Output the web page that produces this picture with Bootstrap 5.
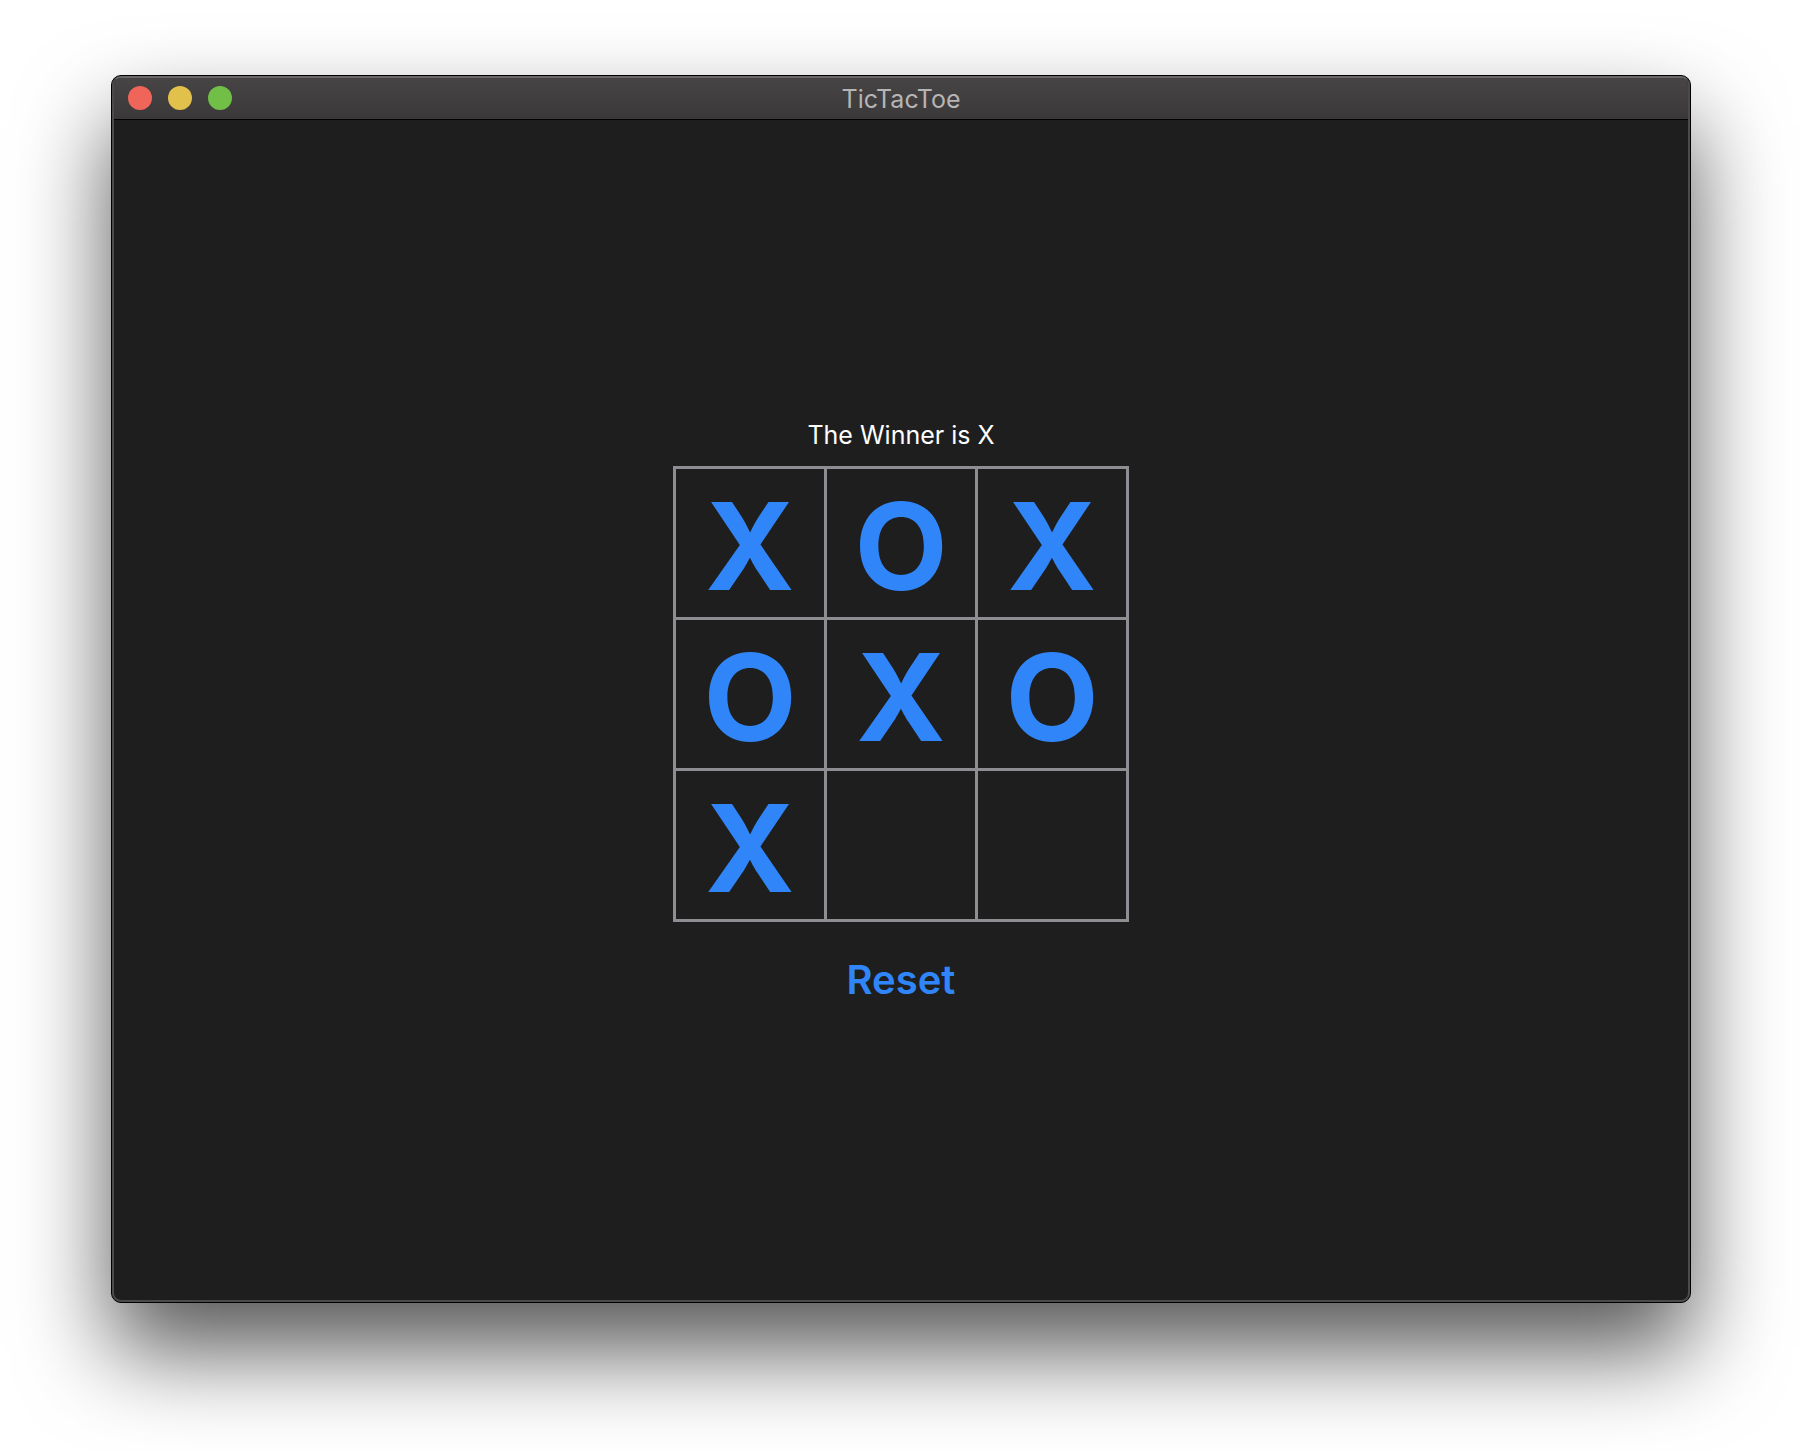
<!DOCTYPE html>
<html lang="en">
<head>
<meta charset="utf-8">
<meta name="viewport" content="width=device-width, initial-scale=1">
<title>TicTacToe</title>
<link href="https://cdn.jsdelivr.net/npm/bootstrap@5.3.0/dist/css/bootstrap.min.css" rel="stylesheet">
<style>
  body {
    padding: 75px 111px 147px;
    background: #fff;
    font-family: Inter, "Liberation Sans", sans-serif;
  }
  .app-window {
    background: #1e1e1e;
    border: 1px solid #000;
    border-radius: 10px;
    box-shadow: 0 48px 92px rgba(0, 0, 0, .66);
  }
  .app-frame {
    border: 2px solid #4b4b4b;
    border-top-color: #696768;
    border-radius: 9px;
  }
  .title-bar {
    height: 42px;
    padding: 0 14px;
    background: linear-gradient(#464445, #3a3838);
    border-bottom: 1px solid #000;
  }
  .title-text {
    color: #b6b4b5;
    font-size: 25px;
    line-height: 32px;
    font-weight: 400;
  }
  .light {
    width: 24px;
    height: 24px;
    border-radius: 50%;
  }
  .light-close { background: #f0655a; }
  .light-min { background: #e1c04c; }
  .light-zoom { background: #71bf47; }
  .game {
    padding-top: 2px;
  }
  .status-text {
    margin-bottom: 15px;
    color: #fff;
    font-size: 25px;
    line-height: 32px;
  }
  .board {
    display: grid;
    grid-template-columns: repeat(3, 148px);
    grid-auto-rows: 148px;
    gap: 3px;
    padding: 3px;
    margin-bottom: 35px;
    background: #8e8d92;
  }
  .board-cell {
    padding: 6px 0 0;
    border: 0;
    background: #1e1e1e;
    color: #3086f8;
    font-size: 121px;
    line-height: 142px;
    font-weight: 700;
  }
  .reset-btn, .reset-btn:hover {
    color: #3086f8;
    font-size: 40px;
    line-height: 46px;
    font-weight: 600;
  }
</style>
</head>
<body class="min-vh-100 d-flex flex-column">
<main class="app-window flex-grow-1 d-flex flex-column">
  <div class="app-frame flex-grow-1 d-flex flex-column overflow-hidden">
    <header class="title-bar d-flex align-items-center">
      <div class="d-flex gap-3 flex-fill w-100 align-self-start pt-2">
        <button type="button" class="light light-close border-0 p-0" aria-label="Close"></button>
        <button type="button" class="light light-min border-0 p-0" aria-label="Minimize"></button>
        <button type="button" class="light light-zoom border-0 p-0" aria-label="Zoom"></button>
      </div>
      <h1 class="title-text m-0">TicTacToe</h1>
      <div class="flex-fill w-100"></div>
    </header>
    <section class="game flex-grow-1 d-flex flex-column align-items-center justify-content-center">
      <p class="status-text" role="status">The Winner is X</p>
      <div class="board">
        <button type="button" class="board-cell">X</button>
        <button type="button" class="board-cell">O</button>
        <button type="button" class="board-cell">X</button>
        <button type="button" class="board-cell">O</button>
        <button type="button" class="board-cell">X</button>
        <button type="button" class="board-cell">O</button>
        <button type="button" class="board-cell">X</button>
        <button type="button" class="board-cell" aria-label="Empty, row 3 column 2"></button>
        <button type="button" class="board-cell" aria-label="Empty, row 3 column 3"></button>
      </div>
      <button type="button" class="reset-btn btn border-0 p-0">Reset</button>
    </section>
  </div>
</main>
<script src="https://cdn.jsdelivr.net/npm/bootstrap@5.3.0/dist/js/bootstrap.bundle.min.js"></script>
</body>
</html>
